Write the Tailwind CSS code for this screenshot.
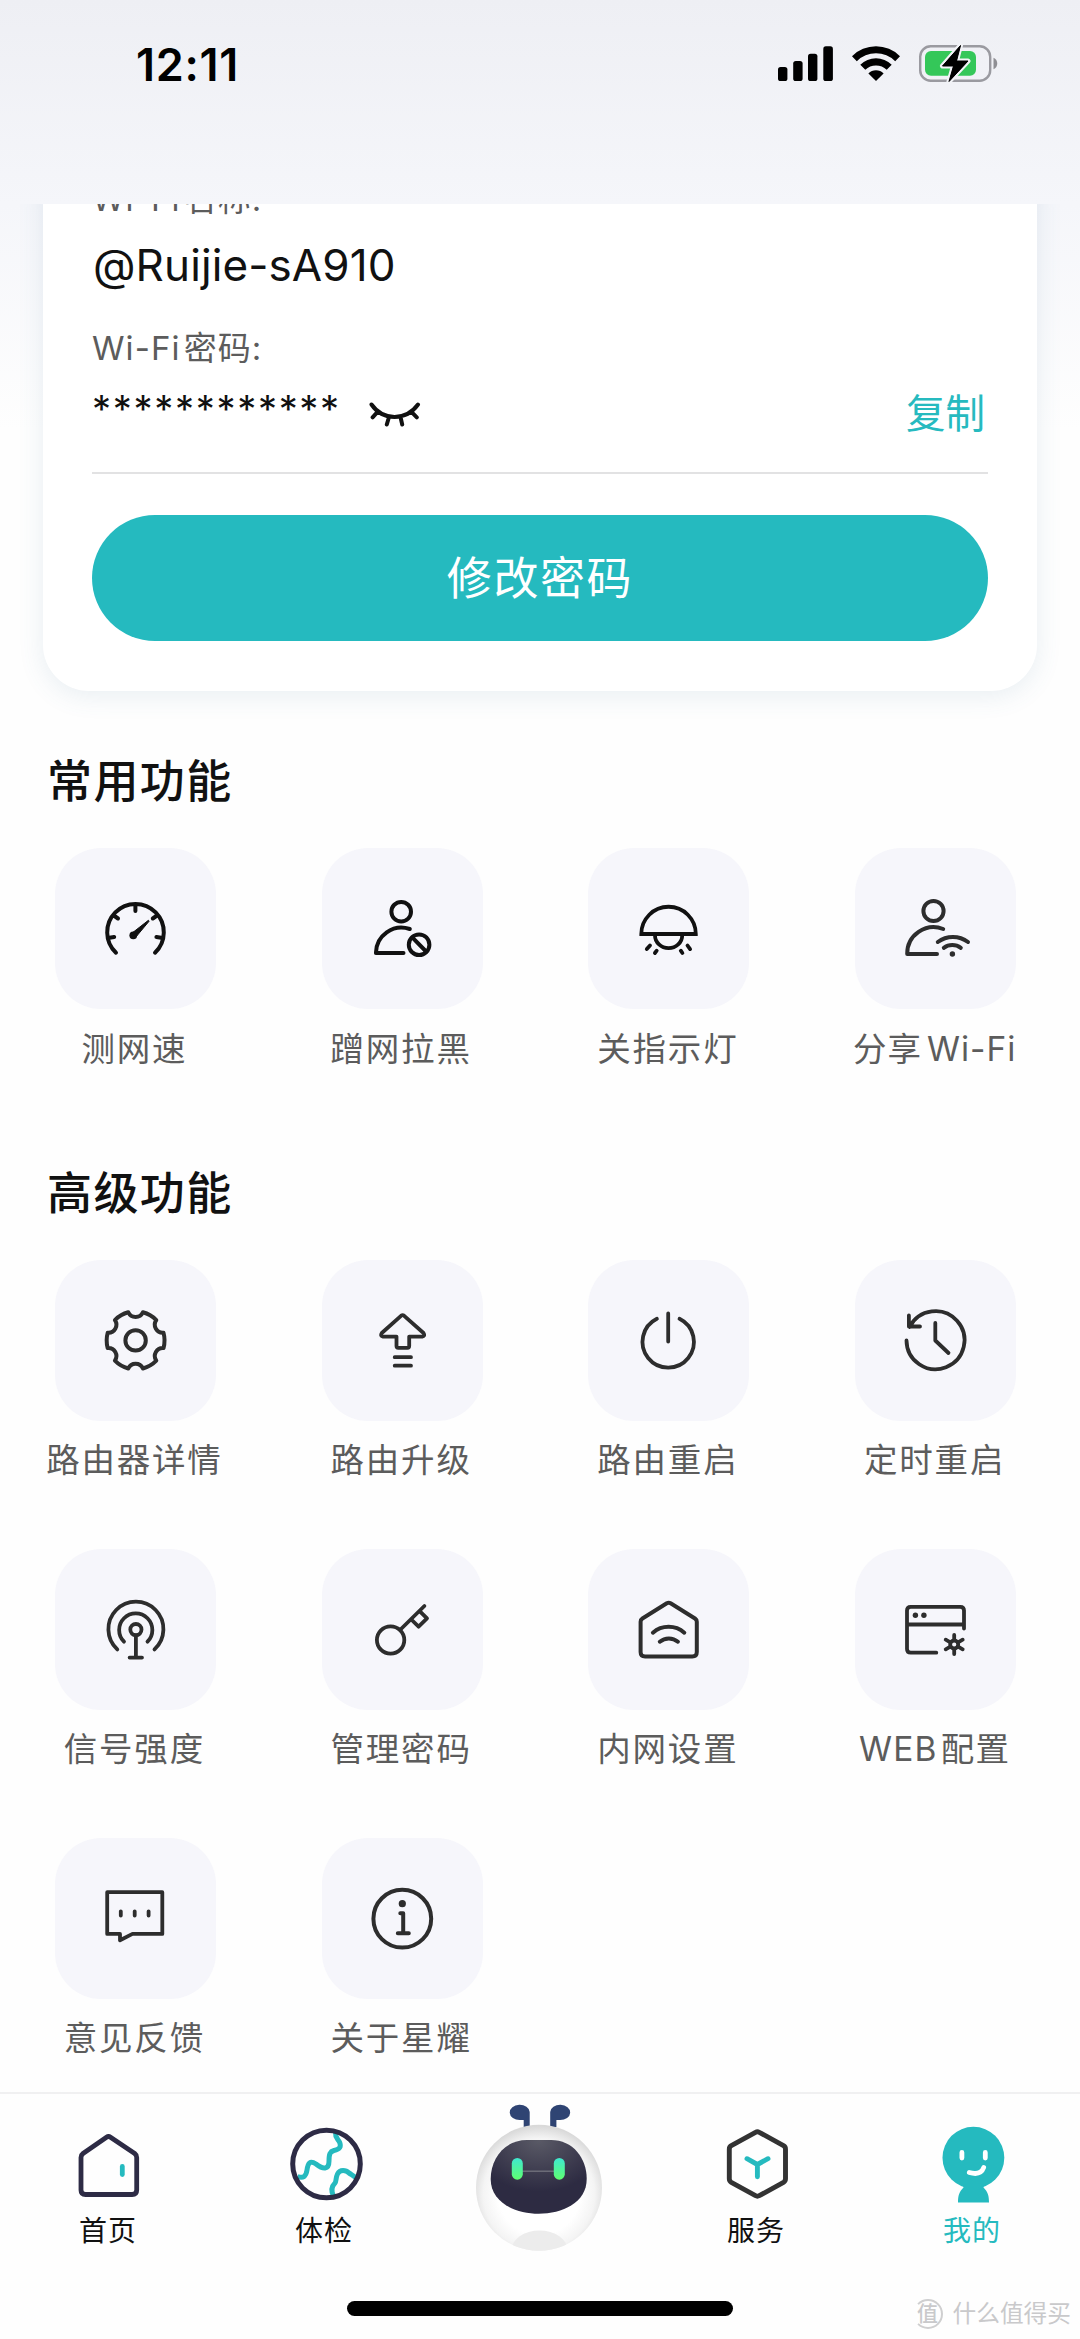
<!DOCTYPE html>
<html lang="zh-CN">
<head>
<meta charset="utf-8">
<title>我的</title>
<script src="https://cdn.jsdelivr.net/npm/@tailwindcss/browser@4"></script>
</head>
<body class="bg-[#fefefe]">
<div class="relative flex h-[2339px] w-[1080px] flex-col overflow-hidden bg-[linear-gradient(180deg,#eeeff4_0px,#f5f6fa_204px,#fefefe_430px)] font-['Inter','Noto_Sans_CJK_SC',sans-serif] text-[#111]">

  <!-- status bar -->
  <header class="flex h-[204px] shrink-0 items-start justify-between pl-[136px] pr-[80px] pt-[39px]">
    <div class="text-[45px] leading-[51px] font-semibold tracking-[0.700px] text-black">12:11</div>
    <svg class="mt-[3px] h-[42px] w-[224px]" viewBox="776 42 224 42" fill="none">
      <g fill="#000">
        <rect x="778" y="67" width="9.4" height="14" rx="2.6"/>
        <rect x="793.2" y="61" width="9.4" height="20" rx="2.6"/>
        <rect x="808" y="53.7" width="9.4" height="27.3" rx="2.6"/>
        <rect x="823.3" y="46.3" width="9.6" height="34.7" rx="2.6"/>
        <path d="M852 56.2a34 34 0 0 1 48 0l-4.8 5a27.3 27.3 0 0 0-38.400 0z"/>
        <path d="M860.300 64.800a22.300 22.300 0 0 1 31.400 0l-5 5a15.200 15.200 0 0 0-21.400 0z"/>
        <path d="M868.400 73.400a10.800 10.800 0 0 1 15.200 0l-7.600 7.600z"/>
      </g>
      <rect x="920.2" y="46.300" width="70" height="34.400" rx="10.500" stroke="#9a9aa0" stroke-width="2.400"/>
      <path d="M993.500 57.700c5 2 5 9.600 0 11.600z" fill="#8f8f94"/>
      <rect x="925" y="51" width="51" height="24.700" rx="6" fill="#34c759"/>
      <path d="M960.500 45.500L942.500 66h11l-4.500 15.500L968 61h-11.500z" fill="#000" stroke="#f2f3f7" stroke-width="5" stroke-linejoin="round" paint-order="stroke"/>
      <path d="M960.500 45.500L942.500 66h11l-4.500 15.500L968 61h-11.500z" fill="#000" stroke="#000" stroke-width="1" stroke-linejoin="round"/>
    </svg>
  </header>

  <main class="flex h-[1888px] shrink-0 flex-col overflow-hidden">
    <!-- wifi card -->
    <section class="mx-[43px] -mt-[60px] flex h-[547px] shrink-0 flex-col rounded-[46px] bg-white px-[49px] pt-[32px] shadow-[0_5px_26px_rgba(70,120,160,0.12)]">
      <p class="text-[33px] leading-[46px] tracking-[1.1px] text-[#5c5c5c]">Wi-Fi<span class="ml-[3px]">名称:</span></p>
      <p class="mt-[16px] pl-[1px] text-[44px] leading-[54px] tracking-[0.1px] text-[#111]">@Ruijie-sA910</p>
      <p class="mt-[33px] text-[33px] leading-[46px] tracking-[1.1px] text-[#5c5c5c]">Wi-Fi<span class="ml-[3px]">密码:</span></p>
      <div class="mt-[16px] flex h-[54px] items-center">
        <span class="h-[54px] w-[277px] whitespace-nowrap text-[38px] leading-[45px] tracking-[1.700px] text-[#111]">************</span>
        <svg class="mt-[2px] h-[28px] w-[52px]" viewBox="369 402 52 28" fill="none" stroke="#111" stroke-width="4" stroke-linecap="round">
          <path d="M371.500 405.500C383 422 406 422 418 405.500M377.800 412.700l-5.200 5.600M389 418l-2.200 7.500M400.500 418l1.700 7.500M411.200 412.700l5.600 5.600"/>
        </svg>
        <span class="ml-auto pr-[3px] text-[39.500px] leading-[54px] text-[#26babf]">复制</span>
      </div>
      <div class="mt-[31px] h-[2px] shrink-0 bg-[#e2e2e3]"></div>
      <button class="mt-[41px] h-[126px] shrink-0 rounded-full bg-[#25babf] text-[45px] leading-[127px] tracking-[1.600px] text-white">修改密码</button>
    </section>

    <h2 class="mt-[58px] pl-[47px] text-[45px] leading-[66px] tracking-[1.400px] font-medium">常用功能</h2>
    <section class="mt-[33px] ml-[2px] grid w-[1067px] grid-cols-4 text-[33.500px] leading-[48px] tracking-[1.800px] text-[#5c5c5c]">
      <div class="flex flex-col items-center">
        <svg class="size-[161px] rounded-[46px] bg-[#f6f6fb]" viewBox="0 0 161 161" fill="none" stroke="#111" stroke-width="4" stroke-linecap="round">
          <path d="M61 104.700A28.300 28.300 0 1 1 100 104.700M80.400 57.500v5.500M58.800 67.500l4.200 3M102 67.500l-4.200 3M54.400 89.700l4.800-.7M106.200 89.700l-4.800-.7"/>
          <circle cx="78.300" cy="87.300" r="3.900" fill="#111" stroke="none"/>
          <path d="M76.500 85.500L93.400 72.300 94.200 73.100 80.500 89.500z" fill="#111" stroke-width="1"/>
        </svg>
        <p class="mt-[16px] pr-[2px]">测网速</p>
      </div>
      <div class="flex flex-col items-center">
        <svg class="size-[161px] rounded-[46px] bg-[#f6f6fb]" viewBox="0 0 161 161" fill="none" stroke="#111" stroke-width="4" stroke-linecap="round" stroke-linejoin="round">
          <circle cx="79.200" cy="63.700" r="9.800"/>
          <path d="M87.800 81A25.600 25.600 0 0 0 53.900 105H81.500"/>
          <circle cx="97.100" cy="96.700" r="10.300"/>
          <path d="M90.500 89.700l13.600 13.800"/>
        </svg>
        <p class="mt-[16px] pr-[2px]">蹭网拉黑</p>
      </div>
      <div class="flex flex-col items-center">
        <svg class="size-[161px] rounded-[46px] bg-[#f6f6fb]" viewBox="0 0 161 161" fill="none" stroke="#111" stroke-width="3.800" stroke-linecap="round">
          <path d="M53.300 86A27.200 27.200 0 0 1 107.800 86Z"/>
          <path d="M67 87.500A13.600 12.600 0 0 0 94.200 87.500M62 97.500l-3.200 3.600M68.700 102.700l-1.800 2.300M92.800 102.700l1.600 2.300M99.500 97.500l2.600 3.600"/>
        </svg>
        <p class="mt-[16px] pr-[2px]">关指示灯</p>
      </div>
      <div class="flex flex-col items-center">
        <svg class="size-[161px] rounded-[46px] bg-[#f6f6fb]" viewBox="0 0 161 161" fill="none" stroke="#2d2d2d" stroke-width="4" stroke-linecap="round" stroke-linejoin="round">
          <circle cx="78.500" cy="63" r="10.100"/>
          <path d="M88.200 81A26.500 26.500 0 0 0 52.200 106H82M82.800 94A25 25 0 0 1 113 94M88.800 99.800A14 14 0 0 1 105.800 99.800"/>
          <circle cx="97.400" cy="106" r="2.700" fill="#2d2d2d" stroke="none"/>
        </svg>
        <p class="mt-[16px] whitespace-nowrap pr-[2px] tracking-[1px]">分享<span class="ml-[5px]">Wi-Fi</span></p>
      </div>
    </section>

    <h2 class="mt-[88px] pl-[47px] text-[45px] leading-[66px] tracking-[1.400px] font-medium">高级功能</h2>
    <section class="mt-[33px] ml-[2px] grid w-[1067px] auto-rows-[289px] grid-cols-4 text-[33.500px] leading-[48px] tracking-[1.800px] text-[#5c5c5c]">
      <div class="flex flex-col items-center">
        <svg class="size-[161px] rounded-[46px] bg-[#f6f6fb]" viewBox="0 0 161 161" fill="none" stroke="#2d2d2d" stroke-width="4" stroke-linejoin="round">
          <g transform="translate(80.600 80.400)">
            <path d="M-7.300-28.100A8 8 0 0 0 7.300-28.100A29 29 0 0 1 20.700-20.300A8 8 0 0 0 27.900-7.700A29 29 0 0 1 27.900 7.700A8 8 0 0 0 20.700 20.300A29 29 0 0 1 7.300 28.100A8 8 0 0 0-7.300 28.100A29 29 0 0 1-20.700 20.300A8 8 0 0 0-27.900 7.700A29 29 0 0 1-27.900-7.700A8 8 0 0 0-20.700-20.300A29 29 0 0 1-7.300-28.100Z"/>
            <circle r="10.200"/>
          </g>
        </svg>
        <p class="mt-[15px] pr-[2px]">路由器详情</p>
      </div>
      <div class="flex flex-col items-center">
        <svg class="size-[161px] rounded-[46px] bg-[#f6f6fb]" viewBox="0 0 161 161" fill="none" stroke="#2d2d2d" stroke-width="3.800" stroke-linecap="round" stroke-linejoin="round">
          <path d="M79.300 55.600q1.300-1 2.600 0L101.500 73q2 3-1.200 3.600H87.200V86q0 1.800-1.800 1.800H76.300q-1.800 0-1.800-1.800V76.600H61q-3.200-.6-1.200-3.600ZM72.700 97.200H89M72.700 105.700H89"/>
        </svg>
        <p class="mt-[15px] pr-[2px]">路由升级</p>
      </div>
      <div class="flex flex-col items-center">
        <svg class="size-[161px] rounded-[46px] bg-[#f6f6fb]" viewBox="0 0 161 161" fill="none" stroke="#2d2d2d" stroke-width="3.800" stroke-linecap="round">
          <path d="M68.900 58.800A25.700 25.700 0 1 0 91.500 58.800M80.200 53.500V81.500"/>
        </svg>
        <p class="mt-[15px] pr-[2px]">路由重启</p>
      </div>
      <div class="flex flex-col items-center">
        <svg class="size-[161px] rounded-[46px] bg-[#f6f6fb]" viewBox="0 0 161 161" fill="none" stroke="#2d2d2d" stroke-width="3.800" stroke-linecap="round" stroke-linejoin="round">
          <path d="M51.500 80.500A29 29 0 1 0 54.700 67M53.900 55.500V66.500H65M80.300 63V80.500L93.500 93"/>
        </svg>
        <p class="mt-[15px] pr-[2px]">定时重启</p>
      </div>
      <div class="flex flex-col items-center">
        <svg class="size-[161px] rounded-[46px] bg-[#f6f6fb]" viewBox="0 0 161 161" fill="none" stroke="#2d2d2d" stroke-width="3.800" stroke-linecap="round">
          <path d="M62.300 100.400A27.500 27.500 0 1 1 99.500 100.400M69 92.700A16.600 16.600 0 1 1 92.500 92.700M80.900 86.500V108.600M74.600 108.600H87"/>
          <circle cx="80.900" cy="80.600" r="5.600"/>
        </svg>
        <p class="mt-[15px] pr-[2px]">信号强度</p>
      </div>
      <div class="flex flex-col items-center">
        <svg class="size-[161px] rounded-[46px] bg-[#f6f6fb]" viewBox="0 0 161 161" fill="none" stroke="#2d2d2d" stroke-width="3.800" stroke-linecap="round" stroke-linejoin="round">
          <circle cx="68.600" cy="91" r="13.700"/>
          <path d="M78.500 80.500L102.400 57M89.800 71l6.800 6.700 8.400-8.300-6.600-6.600"/>
        </svg>
        <p class="mt-[15px] pr-[2px]">管理密码</p>
      </div>
      <div class="flex flex-col items-center">
        <svg class="size-[161px] rounded-[46px] bg-[#f6f6fb]" viewBox="0 0 161 161" fill="none" stroke="#2d2d2d" stroke-width="4" stroke-linecap="round" stroke-linejoin="round">
          <path d="M78.800 54.300q1.900-1 3.800 0L107 69.500q1.800 1.200 1.800 3.300V103q0 4.500-4.500 4.500H57.100q-4.500 0-4.500-4.500V72.800q0-2.100 1.800-3.300ZM64.900 83.700A24 24 0 0 1 96.300 83.700M71.800 92.700A14 14 0 0 1 89.900 92.700"/>
        </svg>
        <p class="mt-[15px] pr-[2px]">内网设置</p>
      </div>
      <div class="flex flex-col items-center">
        <svg class="size-[161px] rounded-[46px] bg-[#f6f6fb]" viewBox="0 0 161 161" fill="none" stroke="#2d2d2d" stroke-width="3.800" stroke-linecap="round" stroke-linejoin="round">
          <path d="M109 79.500V61.500q0-3.700-3.700-3.700H55.700q-3.700 0-3.700 3.700V100q0 3.700 3.700 3.700H81.300M52 75.500H109"/>
          <circle cx="60.400" cy="66.200" r="2.700" fill="#2d2d2d" stroke="none"/>
          <circle cx="68.900" cy="66.200" r="2.700" fill="#2d2d2d" stroke="none"/>
          <circle cx="99.200" cy="95.500" r="4"/>
          <path d="M99.200 91v-5M99.200 100v5M95.300 93.300l-4.600-2.600M103.100 97.700l4.600 2.600M95.300 97.700l-4.600 2.600M103.100 93.300l4.600-2.600"/>
        </svg>
        <p class="mt-[15px] whitespace-nowrap pr-[2px] tracking-[1.200px]">WEB<span class="ml-[3px]">配置</span></p>
      </div>
      <div class="flex flex-col items-center">
        <svg class="size-[161px] rounded-[46px] bg-[#f6f6fb]" viewBox="0 0 161 161" fill="none" stroke="#2d2d2d" stroke-width="3.800" stroke-linecap="round" stroke-linejoin="round">
          <path d="M52.200 54.200H107.300V95.900H77.500L65 102.300V95.900H52.200ZM65.800 73.300v4.200M79.700 73.300v4.200M93.600 73.300v4.200"/>
        </svg>
        <p class="mt-[15px] pr-[2px]">意见反馈</p>
      </div>
      <div class="flex flex-col items-center">
        <svg class="size-[161px] rounded-[46px] bg-[#f6f6fb]" viewBox="0 0 161 161" fill="none" stroke="#2d2d2d" stroke-width="4" stroke-linecap="round" stroke-linejoin="round">
          <circle cx="80.300" cy="80.700" r="28.900"/>
          <circle cx="80.300" cy="65.700" r="3.600" fill="#2d2d2d" stroke="none"/>
          <path d="M78.300 75.300H81.200V95.300M75.800 95.300H86.800"/>
        </svg>
        <p class="mt-[15px] pr-[2px]">关于星耀</p>
      </div>
    </section>
  </main>

  <!-- tab bar -->
  <nav class="flex h-[247px] shrink-0 flex-col items-center border-t-2 border-[#f0f0f1] bg-[#fefefe]">
    <div class="grid h-[207px] w-full shrink-0 grid-cols-5 text-[28px] leading-[40px] tracking-[1px] text-[#111]">
      <div class="flex flex-col items-center pt-[28px]">
        <svg class="h-[84px] w-[80px]" viewBox="68 2122 80 84" fill="none" stroke="#2d2b45" stroke-width="4.800" stroke-linecap="round" stroke-linejoin="round">
          <path d="M106.500 2137.200q2-1.400 4 0L134.700 2153.500q2 1.500 2 4V2190q0 4.500-4.500 4.500H85.500q-4.500 0-4.500-4.500V2157.500q0-2.500 2-4Z"/>
          <path d="M122.300 2166.500V2174.500" stroke="#25babf"/>
        </svg>
        <span class="mt-[5px]">首页</span>
      </div>
      <div class="flex flex-col items-center pt-[28px]">
        <svg class="h-[84px] w-[80px]" viewBox="284 2122 80 84" fill="none" stroke-width="5">
          <g stroke="#25babf" stroke-linejoin="round">
            <path d="M297.500 2176.500C303 2178.500 306 2177 307 2170C308 2163 310 2160 316 2164C323 2169.500 329 2170 329 2161C329 2154 330 2151.500 334 2150.500C340 2149.500 341.500 2146.500 339.500 2142C337 2138 335 2137 335.500 2132.500"/>
            <path d="M333.500 2196C330.500 2190 332 2186 335 2183C336.500 2181 335.500 2178 337.500 2174C340 2169 346 2170 349 2173C351.500 2174.500 353 2176 356 2177.500"/>
          </g>
          <circle cx="326.500" cy="2164" r="33.800" stroke="#2d2b45"/>
        </svg>
        <span class="mt-[5px]">体检</span>
      </div>
      <div class="flex flex-col items-center pt-[6px]">
        <svg class="h-[156px] w-[140px]" viewBox="470 2100 140 156" fill="none">
          <defs>
            <radialGradient id="shell" cx="0.500" cy="0.550" r="0.540">
              <stop offset="0.600" stop-color="#fff"/><stop offset="0.820" stop-color="#f4f4f4"/><stop offset="1" stop-color="#d9d9d9"/>
            </radialGradient>
            <radialGradient id="visor" cx="0.500" cy="0" r="0.700">
              <stop offset="0" stop-color="#5a5a66"/><stop offset="1" stop-color="#2d2b42"/>
            </radialGradient>
            <linearGradient id="eye" x1="0" y1="0" x2="0" y2="1">
              <stop offset="0" stop-color="#3fe8d0"/><stop offset="1" stop-color="#5fff70"/>
            </linearGradient>
            <clipPath id="head"><circle cx="539" cy="2187.700" r="63"/></clipPath>
          </defs>
          <g fill="#2f4473">
            <path d="M529.700 2127V2112A10 7.600 0 1 0 520 2120H523.700V2127Z"/>
            <path d="M550.200 2127V2112A10 7.600 0 1 1 560 2120H556.400V2127Z"/>
          </g>
          <circle cx="539" cy="2187.700" r="63" fill="url(#shell)"/>
          <ellipse cx="539.500" cy="2250" rx="28" ry="19.500" fill="#ececec" clip-path="url(#head)"/>
          <path d="M527 2140H551C573 2140 586.700 2158 586.700 2179C586.700 2203 562 2213.700 538.700 2213.700C516 2213.700 490.700 2203 490.700 2179C490.700 2158 505 2140 527 2140Z" fill="url(#visor)"/>
          <path d="M522 2171.200H554" stroke="#74747f" stroke-width="1.300"/>
          <rect x="511.800" y="2158" width="11" height="21.700" rx="5.500" fill="url(#eye)"/>
          <rect x="553.800" y="2158" width="11" height="21.700" rx="5.500" fill="url(#eye)"/>
        </svg>
      </div>
      <div class="flex flex-col items-center pt-[28px]">
        <svg class="h-[84px] w-[80px]" viewBox="716 2122 80 84" fill="none" stroke-width="4.900" stroke-linecap="round" stroke-linejoin="round">
          <path d="M755.500 2132.300q1.900-1 3.800 0L783.500 2145.700q2 1.200 2 3.500V2178.800q0 2.300-2 3.500L759.300 2195.700q-1.900 1-3.800 0L731.300 2182.300q-2-1.200-2-3.500V2149.200q0-2.300 2-3.500Z" stroke="#333"/>
          <path d="M747 2158.700L757.400 2164.500 768 2158.700M757.400 2164.500V2176.800" stroke="#25babf"/>
        </svg>
        <span class="mt-[5px]">服务</span>
      </div>
      <div class="flex flex-col items-center pt-[28px] text-[#25babf]">
        <svg class="h-[84px] w-[80px]" viewBox="932 2122 80 84" fill="none">
          <circle cx="973.400" cy="2157.700" r="30.900" fill="#25babf"/>
          <path d="M963 2185H984L983.500 2187.500C988 2192 989 2196 989 2202.500H958C958 2196 959 2192 963.500 2187.500Z" fill="#25babf"/>
          <path d="M961.900 2152.500V2158M985.300 2152.500V2158M969.300 2172.500C976 2174.500 981.500 2173.500 983.700 2167.500" stroke="#fff" stroke-width="4.800" stroke-linecap="round"/>
        </svg>
        <span class="mt-[5px]">我的</span>
      </div>
    </div>
    <div class="h-[15px] w-[386px] shrink-0 rounded-full bg-black"></div>
  </nav>

  <!-- watermark -->
  <div class="absolute right-[9px] bottom-[8px] flex items-center text-[#c9c9cb]">
    <div class="flex size-[30px] items-center justify-center rounded-full border-2 border-l-transparent border-[#cfcfd0] text-[21px] leading-[26px] font-medium">值</div>
    <span class="ml-[10px] text-[23.700px] leading-[34px]">什么值得买</span>
  </div>
</div>
</body>
</html>
